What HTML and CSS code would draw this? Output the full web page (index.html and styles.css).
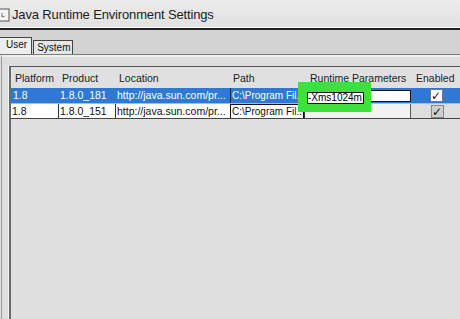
FILE: index.html
```html
<!DOCTYPE html>
<html>
<head>
<meta charset="utf-8">
<link rel="stylesheet" href="styles.css">
</head>
<body>
<div class="window">
  <div class="titlebar">
    <svg class="appicon" width="10" height="14" viewBox="0 0 10 14">
      <rect x="-3" y="1" width="12" height="12" fill="#f4f4f4" stroke="#555" stroke-width="1"/>
      <path d="M1 8 q2 2 4 0 M2 5 v3" stroke="#777" stroke-width="1" fill="none"/>
    </svg>
    <span class="title">Java Runtime Environment Settings</span>
  </div>
  <div class="tabstrip">
    <div class="tab active">User</div>
    <div class="tab">System</div>
  </div>
  <div class="panel">
    <div class="pane">
      <div class="table">
        <div class="row head">
          <div class="cell">Platform</div>
          <div class="cell">Product</div>
          <div class="cell">Location</div>
          <div class="cell">Path</div>
          <div class="cell">Runtime Parameters</div>
          <div class="cell">Enabled</div>
        </div>
        <div class="row sel">
          <div class="cell">1.8</div>
          <div class="cell">1.8.0_181</div>
          <div class="cell">http://java.sun.com/pr...</div>
          <div class="cell path focus">C:\Program Fil.</div>
          <div class="cell edit-wrap"><div class="edit"></div></div>
          <div class="cell check-cell"><span class="check">✓</span></div>
        </div>
        <div class="row plain">
          <div class="cell">1.8</div>
          <div class="cell">1.8.0_151</div>
          <div class="cell">http://java.sun.com/pr...</div>
          <div class="cell path boxed">C:\Program Fil...</div>
          <div class="cell param"></div>
          <div class="cell check-cell gray"><span class="check dim">✓</span></div>
        </div>
      </div>
    </div>
    <div class="highlight"><div class="hl-field">-Xms1024m</div></div>
  </div>
</div>
</body>
</html>
```
FILE: styles.css
```css
html, body {
  margin: 0;
  padding: 0;
}
body {
  width: 460px;
  height: 319px;
  overflow: hidden;
  background: #dfdfdf;
  font-family: "Liberation Sans", Arial, sans-serif;
  color: #111;
}
.window {
  display: flex;
  flex-direction: column;
  height: 319px;
}
.titlebar {
  height: 27px;
  display: flex;
  align-items: center;
  background: linear-gradient(#ececec, #e1e1e1);
  border-bottom: 1px solid #fafafa;
  overflow: hidden;
}
.appicon {
  flex: none;
  margin-top: 2px;
}
.title {
  margin-left: 2px;
  margin-top: 2px;
  font-size: 13px;
  color: #1c1c1c;
  letter-spacing: -0.15px;
}
.tabstrip {
  height: 24px;
  background: #d3d3d3;
  border-top: 2px solid #222;
  border-bottom: 1px solid #7a7a7a;
  display: flex;
  align-items: flex-end;
  gap: 1px;
}
.tab {
  font-size: 10px;
  border: 1px solid #444;
  border-bottom: none;
  background: #e6e6e6;
  height: 13px;
  padding: 0 2px 0 3px;
  line-height: 13px;
}
.tab.active {
  height: 16px;
  line-height: 13px;
  background: #eeeeee;
  border-left: none;
  padding: 0 4px 0 6px;
}
.panel {
  position: relative;
  flex: 1;
  border-left: 1px solid #9a9a9a;
  margin-left: 1px;
  border-top: 2px solid #f0f0f0;
  padding: 9px 0 0 7px;
  background: #dedede;
}
.pane {
  height: 100%;
  border-left: 2px solid #6a6a6a;
  border-top: 1px solid #555;
  box-shadow: -1px 0 0 #f6f6f6;
  background: #dfdfdf;
}
.table {
  font-size: 10.5px;
}
.row {
  display: grid;
  grid-template-columns: 47px 57px 115px 74px 107px 60px;
}
.cell {
  white-space: nowrap;
  overflow: hidden;
  padding-left: 2px;
}
.cell.path {
  font-size: 10px;
}
.head {
  height: 21px;
  align-items: center;
  background: #e0e0e0;
  color: #222;
}
.head .cell:nth-child(1) { padding-left: 4px; }
.head .cell:nth-child(2) { padding-left: 4px; }
.head .cell:nth-child(3) { padding-left: 4px; }
.head .cell:nth-child(4) { padding-left: 3px; }
.head .cell:nth-child(5) { padding-left: 6px; }
.head .cell:nth-child(6) { padding-left: 5px; }
.sel {
  height: 15px;
  background: #2f78d3;
  color: #fff;
  line-height: 15px;
}
.sel .cell.focus {
  border-left: 1px solid #1a2a40;
  padding-left: 1px;
}
.edit-wrap {
  padding: 2px 0 1px 3px;
}
.edit {
  height: 10px;
  background: #fff;
  border: 1px solid #111;
}
.check-cell {
  display: flex;
  justify-content: center;
  align-items: center;
  padding-left: 0;
  width: 50px;
}
.check {
  width: 13px;
  height: 13px;
  background: #fff;
  border: 1px solid #777;
  box-sizing: border-box;
  color: #111;
  font-size: 12px;
  font-weight: bold;
  line-height: 12px;
  text-align: center;
  font-family: "DejaVu Sans", sans-serif;
}
.check.dim {
  background: #cfcfcf;
  border-color: #888;
}
.plain {
  height: 14px;
  line-height: 14px;
  background: #fff;
  color: #111;
  border-top: 1px solid #bbb;
  border-bottom: 1px solid #444;
}
.plain .cell {
  border-left: 1px solid #333;
  padding-left: 1px;
}
.plain .cell:first-child {
  border-left: none;
}
.plain .boxed {
  border: 1px solid #111;
  border-bottom: none;
}
.plain .param {
  background: #f2f2f2;
  border-right: 1px solid #555;
}
.plain .gray {
  background: #dedede;
  border-left: none;
}
.highlight {
  position: absolute;
  left: 296px;
  top: 25px;
  width: 73px;
  height: 30px;
  background: #3ee03c;
  padding: 10px 0 0 9px;
  box-sizing: border-box;
}
.hl-field {
  width: 57px;
  height: 12px;
  box-sizing: border-box;
  background: #fff;
  border: 1px solid #111;
  color: #000;
  font-size: 10px;
  line-height: 10px;
  white-space: nowrap;
  overflow: hidden;
}
```
